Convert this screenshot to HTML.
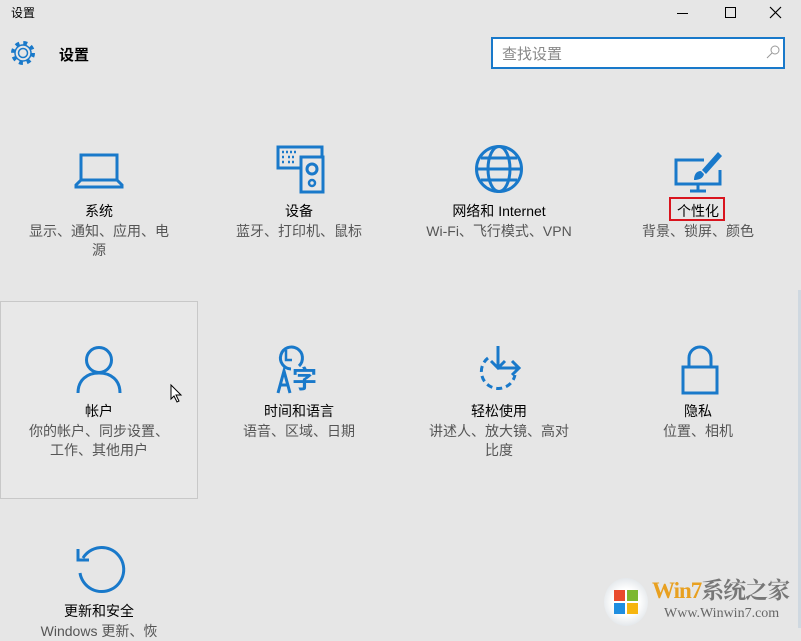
<!DOCTYPE html>
<html><head><meta charset="utf-8"><style>
body{margin:0;width:801px;height:628px;background:#e6e6e6;overflow:hidden;position:relative;font-family:"Liberation Sans","Noto Sans CJK SC",sans-serif}
.a{position:absolute;white-space:nowrap}
.t{position:absolute;width:190px;text-align:center;font-size:14px;color:#000;line-height:19px}
.s{position:absolute;width:170px;text-align:center;font-size:14px;color:#555;line-height:19px}
svg{position:absolute;overflow:visible}
</style></head><body>
<div class="a" style="left:11px;top:4px;font-size:12px;color:#000">设置</div>
<div class="a" style="left:677px;top:13px;width:11px;height:1px;background:#000"></div>
<div class="a" style="left:725px;top:7px;width:9px;height:9px;border:1px solid #000"></div>
<svg style="left:770px;top:7px" width="11" height="11"><path d="M0 0L11 11M11 0L0 11" stroke="#000" stroke-width="1.2"/></svg>
<svg style="left:10px;top:40px" width="26" height="26" viewBox="0 0 26 26"><circle cx="13" cy="13" r="9.5" fill="none" stroke="#1979ca" stroke-width="5" stroke-dasharray="3.7 3.76"/><circle cx="13" cy="13" r="8" fill="#e6e6e6" stroke="#1979ca" stroke-width="1.5"/><circle cx="13" cy="13" r="4.5" fill="none" stroke="#1979ca" stroke-width="1.5"/></svg>
<div class="a" style="left:59px;top:44px;font-size:15px;font-weight:bold;color:#000">设置</div>
<div class="a" style="left:491px;top:37px;width:290px;height:28px;border:2px solid #1979ca;background:#fff"></div>
<div class="a" style="left:502px;top:43px;font-size:15px;color:#888">查找设置</div>
<svg style="left:766px;top:45px" width="14" height="14"><circle cx="9" cy="5" r="4" fill="none" stroke="#999"/><path d="M6 8L1 13" stroke="#999"/></svg>
<div class="a" style="left:0;top:301px;width:196px;height:196px;border:1px solid #c8c8c8;background:#e8e8e8"></div>
<div class="a" style="left:798px;top:290px;width:3px;height:338px;background:#cfd8e0"></div>

<svg style="left:75px;top:153px" width="48" height="36"><rect x="6" y="2" width="36" height="25" fill="none" stroke="#1979ca" stroke-width="3"/><path d="M6 27L1 32v2h46v-2l-5-5" fill="none" stroke="#1979ca" stroke-width="3"/></svg>
<svg style="left:276px;top:145px" width="48" height="48"><path d="M26 23H2V2h44v10" fill="none" stroke="#1979ca" stroke-width="3"/><rect x="25" y="12" width="22" height="35" fill="none" stroke="#1979ca" stroke-width="3"/><circle cx="36" cy="24" r="5" fill="none" stroke="#1979ca" stroke-width="3"/><circle cx="36" cy="38" r="3" fill="none" stroke="#1979ca" stroke-width="2.5"/><path d="M6 7h16M6 12h3M12 12h8M6 17h3M12 17h8" stroke="#1979ca" stroke-width="2.5" stroke-dasharray="2 2"/></svg>
<svg style="left:475px;top:145px" width="48" height="48"><circle cx="24" cy="24" r="22.5" fill="none" stroke="#1979ca" stroke-width="3"/><ellipse cx="24" cy="24" rx="11" ry="22.5" fill="none" stroke="#1979ca" stroke-width="3"/><path d="M1.5 24h45M6 13h36M6 35h36" stroke="#1979ca" stroke-width="3"/></svg>
<svg style="left:674px;top:150px" width="48" height="44"><path d="M30 10H2v24h44V20" fill="none" stroke="#1979ca" stroke-width="3"/><path d="M24 34v6M16 41h16" stroke="#1979ca" stroke-width="3"/><path d="M44 2L28 20l4 4L48 6z" fill="#1979ca"/><path d="M27 21c-5 0-7 4-7 9 4 0 9-1 10-6z" fill="#1979ca"/></svg>
<div class="t" style="left:4px;top:202px">系统</div>
<div class="s" style="left:14px;top:222px">显示、通知、应用、电<br>源</div>
<div class="t" style="left:204px;top:202px">设备</div>
<div class="s" style="left:214px;top:222px">蓝牙、打印机、鼠标</div>
<div class="t" style="left:404px;top:202px">网络和 Internet</div>
<div class="s" style="left:404px;top:222px;width:190px">Wi-Fi、飞行模式、VPN</div>
<div class="a" style="left:669px;top:197px;width:56px;height:24px;border:2px solid #d9141e;box-sizing:border-box"></div>
<div class="t" style="left:603px;top:202px">个性化</div>
<div class="s" style="left:613px;top:222px">背景、锁屏、颜色</div>

<svg style="left:75px;top:345px" width="48" height="50"><circle cx="24" cy="15" r="12.5" fill="none" stroke="#1979ca" stroke-width="3"/><path d="M3 48c0-13 9-20 21-20s21 7 21 20" fill="none" stroke="#1979ca" stroke-width="3"/></svg>
<svg style="left:275px;top:345px" width="50" height="50"><path d="M16 24A11 11 0 1 1 24 21" fill="none" stroke="#1979ca" stroke-width="3"/><path d="M11 5v10h6" fill="none" stroke="#1979ca" stroke-width="2.5"/><path d="M3 48L9 26l6 22M5 40h8" fill="none" stroke="#1979ca" stroke-width="3"/><text x="17" y="43" font-size="25" font-weight="bold" fill="#1979ca" font-family="Noto Sans CJK SC,sans-serif">字</text></svg>
<svg style="left:474px;top:345px" width="52" height="50"><path d="M14 13A17 17 0 1 0 41 30" fill="none" stroke="#1979ca" stroke-width="3" stroke-dasharray="6 4"/><path d="M24 1v22M17 16l7 7 7-7M24 23h21M38 16l7 7-7 7" fill="none" stroke="#1979ca" stroke-width="3"/></svg>
<svg style="left:681px;top:345px" width="40" height="50"><rect x="2" y="22" width="34" height="26" fill="none" stroke="#1979ca" stroke-width="3"/><path d="M8 22V13a11 11 0 0 1 22 0v9" fill="none" stroke="#1979ca" stroke-width="3"/></svg>
<svg style="left:170px;top:384px" width="14" height="20"><path d="M1 1v14l3-3 3 6 2-1-3-6h5z" fill="#fff" stroke="#000"/></svg>
<div class="t" style="left:4px;top:402px">帐户</div>
<div class="s" style="left:14px;top:422px">你的帐户、同步设置、<br>工作、其他用户</div>
<div class="t" style="left:204px;top:402px">时间和语言</div>
<div class="s" style="left:214px;top:422px">语音、区域、日期</div>
<div class="t" style="left:404px;top:402px">轻松使用</div>
<div class="s" style="left:414px;top:422px">讲述人、放大镜、高对<br>比度</div>
<div class="t" style="left:603px;top:402px">隐私</div>
<div class="s" style="left:613px;top:422px">位置、相机</div>

<svg style="left:75px;top:545px" width="50" height="50"><path d="M8 13A22 22 0 1 1 5 28" fill="none" stroke="#1979ca" stroke-width="3"/><path d="M3 4v11h11" fill="none" stroke="#1979ca" stroke-width="3"/></svg>
<div class="t" style="left:4px;top:602px">更新和安全</div>
<div class="s" style="left:14px;top:622px">Windows 更新、恢</div>

<div class="a" style="left:604px;top:578px;width:44px;height:48px;border-radius:50%;background:radial-gradient(circle,#fff 40%,#cfd6dc)"></div>
<div class="a" style="left:614px;top:590px;width:11px;height:11px;background:#e94b2d"></div><div class="a" style="left:627px;top:590px;width:11px;height:11px;background:#7cb82f"></div><div class="a" style="left:614px;top:603px;width:11px;height:11px;background:#1f8ee0"></div><div class="a" style="left:627px;top:603px;width:11px;height:11px;background:#f6b50f"></div>
<div class="a" style="left:652px;top:577px;font-size:23px;line-height:28px;font-weight:bold;color:#777;font-family:'Liberation Serif','Noto Serif CJK SC',serif;letter-spacing:-1px"><span style="color:#e8a020">Win7</span>系统之家</div>
<div class="a" style="left:664px;top:606px;font-size:14px;color:#666;font-family:'Liberation Serif',serif">Www.Winwin7.com</div>
</body></html>
